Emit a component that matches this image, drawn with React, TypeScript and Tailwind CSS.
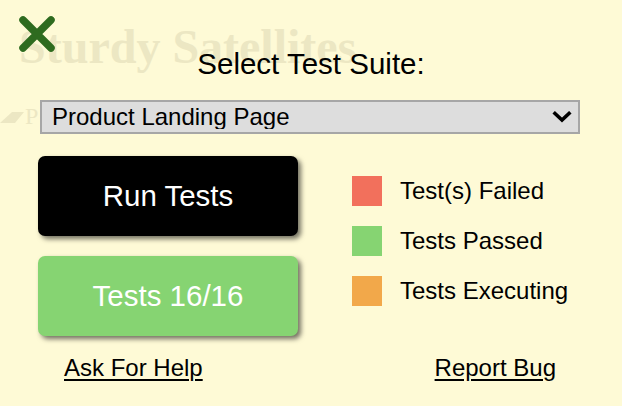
export default function App() {
    const legend = [
        { label: 'Test(s) Failed', color: 'bg-[#f2705c]' },
        { label: 'Tests Passed', color: 'bg-[#86d472]' },
        { label: 'Tests Executing', color: 'bg-[#f2a84a]' },
    ];

    return (
        <div className="relative w-[622px] h-[406px] overflow-hidden bg-[#fefad6] font-['Liberation_Sans',Arial,sans-serif] text-black">
            {/* faded site branding behind the panel */}
            <div className="absolute left-[19px] top-[23px] font-['Liberation_Serif',serif] font-bold text-[48px] leading-none text-[#ece7c3] select-none">
                Sturdy Satellites
            </div>
            <div className="absolute left-0 top-[104px] flex items-center gap-[1px] select-none">
                <svg width="24" height="18" viewBox="0 0 24 18">
                    <polygon points="0,16 12,5 24,5 15,16" fill="#ece7c3" />
                </svg>
                <span className="font-['Liberation_Serif',serif] text-[24px] leading-none text-[#ece7c3]">P</span>
            </div>

            {/* close */}
            <button className="absolute left-[18px] top-[15px] w-[38px] h-[38px]" aria-label="Close">
                <svg width="38" height="38" viewBox="0 0 38 38">
                    <path d="M5 5 L33 33 M33 5 L5 33" stroke="#2e6b1f" strokeWidth="7.5" strokeLinecap="round" />
                </svg>
            </button>

            <div className="relative flex flex-col">
                <h2 className="mt-[49px] h-[29px] text-center text-[29.5px] leading-[29px]">Select Test Suite:</h2>

                <div className="relative mt-[22px] ml-[40px] w-[540px] h-[34px]">
                    <select className="appearance-none w-full h-full bg-[#dddddd] border-2 border-[#a6a6a6] pl-[10px] text-[24px] leading-none outline-none font-['Liberation_Sans',Arial,sans-serif]">
                        <option>Product Landing Page</option>
                    </select>
                    <svg className="absolute right-[8px] top-[11px] pointer-events-none" width="20" height="12" viewBox="0 0 20 12">
                        <path d="M3 2.5 L10 9 L17 2.5" fill="none" stroke="#000" strokeWidth="3.6" strokeLinecap="square" />
                    </svg>
                </div>

                <div className="mt-[22px] flex">
                    <div className="ml-[38px] flex flex-col gap-[20px]">
                        <button className="w-[260px] h-[80px] rounded-[7px] bg-black text-white text-[29.5px] shadow-[3px_3px_5px_rgba(0,0,0,0.55)]">
                            Run Tests
                        </button>
                        <button className="w-[260px] h-[80px] rounded-[7px] bg-[#86d472] text-white text-[29.5px] shadow-[3px_3px_5px_rgba(0,0,0,0.55)]">
                            Tests 16/16
                        </button>
                    </div>

                    <div className="ml-[54px] mt-[20px] flex flex-col gap-[20px]">
                        {legend.map((item) => (
                            <div key={item.label} className="flex items-center gap-[18px]">
                                <div className={`w-[30px] h-[30px] ${item.color}`}></div>
                                <span className="text-[24px] leading-none">{item.label}</span>
                            </div>
                        ))}
                    </div>
                </div>

                <div className="mt-[20px] flex justify-between pl-[64px] pr-[66px] text-[24px] leading-none">
                    <a href="#" className="underline underline-offset-[3px]">Ask For Help</a>
                    <a href="#" className="underline underline-offset-[3px]">Report Bug</a>
                </div>
            </div>
        </div>
    );
}
